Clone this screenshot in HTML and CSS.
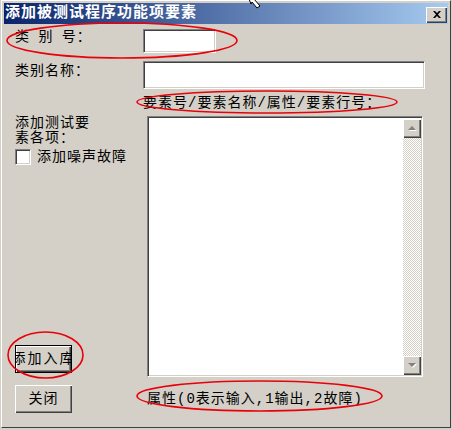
FILE: index.html
```html
<!DOCTYPE html>
<html lang="zh-CN">
<head>
  <meta charset="UTF-8">
  <title>添加被测试程序功能项要素</title>
  <link rel="stylesheet" href="styles.css">
</head>
<body>
  <div class="window">
    <div class="titlebar">
      <span class="title">添加被测试程序功能项要素</span>
      <button class="close-btn">
        <svg width="8" height="7" viewBox="0 0 8 7"><path d="M0 0h2l2 2 2-2h2L5 3.5 8 7H6L4 5 2 7H0l3-3.5z" fill="#000"/></svg>
      </button>
    </div>

    <div class="dialog">
      <div class="row row-id">
        <span class="cell-label spaced">类 别 号：</span>
        <div class="field field-id"></div>
      </div>

      <div class="row row-name">
        <span class="cell-label">类别名称：</span>
        <div class="field field-name"></div>
      </div>

      <div class="row row-hint">
        <span class="hint">要素号/要素名称/属性/要素行号：</span>
      </div>

      <div class="row row-items">
        <div class="left-col">
          <div>
            <div class="items-label">添加测试要素各项：</div>
            <label class="check">
              <span class="check-box"></span>
              <span>添加噪声故障</span>
            </label>
          </div>
          <button class="btn btn-default"><span>添加入库</span></button>
        </div>
        <div class="memo">
          <div class="memo-text"></div>
          <div class="scrollbar">
            <div class="scroll-btn">
              <svg width="9" height="6" viewBox="0 0 9 6"><path d="M1 5h8L5 1z" fill="#fff"/><path d="M0 4h8L4 0z" fill="#808080"/></svg>
            </div>
            <div class="scroll-track"></div>
            <div class="scroll-btn">
              <svg width="9" height="6" viewBox="0 0 9 6"><path d="M1 1h8L5 5z" fill="#fff"/><path d="M0 0h8L4 4z" fill="#808080"/></svg>
            </div>
          </div>
        </div>
      </div>

      <div class="row row-bottom">
        <button class="btn"><span>关闭</span></button>
        <span class="note">属性(0表示输入,1输出,2故障)</span>
      </div>
    </div>
  </div>

  <!-- пометки красным поверх окна -->
  <svg class="marks" width="452" height="430" viewBox="0 0 452 430">
    <g fill="none" stroke="#e8000a" stroke-width="1.6">
      <ellipse cx="122" cy="40.5" rx="115" ry="17.5"/>
      <ellipse cx="267" cy="102" rx="130" ry="11"/>
      <ellipse cx="45.5" cy="355" rx="37.5" ry="23"/>
      <ellipse cx="259.5" cy="396" rx="122.5" ry="15"/>
    </g>
  </svg>
  <svg class="cursor" width="16" height="10" viewBox="0 0 16 10">
    <path d="M1 0h5l6 7-3 2-5-6-1 2z" fill="#fff" stroke="#000" stroke-width="1"/>
  </svg>
</body>
</html>
```

FILE: styles.css
```css
/* окно в стиле Windows 2000 */
* {
  box-sizing: border-box;
}
body {
  margin: 0;
  width: 452px;
  height: 430px;
  overflow: hidden;
  position: relative;
  background: #d4d0c8;
  color: #000;
  font-family: "Liberation Mono", "Noto Sans CJK SC", monospace;
  font-size: 14px;
  line-height: 16px;
  letter-spacing: 1px;
}
.window {
  margin-left: 1px;
  width: 450px;
  height: 428px;
  border-top: 1px solid #fff;
  border-left: 1px solid #fff;
  border-right: 1px solid #404040;
  border-bottom: 1px solid #404040;
  padding: 2px 2px 0 2px;
}
/* заголовок */
.titlebar {
  height: 21px;
  display: flex;
  align-items: center;
  justify-content: space-between;
  padding: 0 1px 0 1px;
  background: linear-gradient(90deg, #0a246a, #a6caf0);
}
.title {
  color: #fff;
  font-weight: bold;
  font-size: 15px;
  letter-spacing: 1px;
}
.close-btn {
  width: 21px;
  height: 16px;
  padding: 0;
  border: 0;
  margin-top: 2px;
  background: #d4d0c8;
  box-shadow: inset 1px 1px #fff, inset -1px -1px #404040, inset -2px -2px #808080;
  display: flex;
  align-items: center;
  justify-content: center;
}
/* содержимое */
.dialog {
  padding: 5px 0 0 11px;
}
.row {
  display: flex;
}
.cell-label {
  width: 128px;
  flex: none;
}
.spaced {
  word-spacing: -1px;
}
.field {
  background: #fff;
  border-top: 1px solid #808080;
  border-left: 1px solid #808080;
  border-right: 1px solid #fff;
  border-bottom: 1px solid #fff;
  box-shadow: inset 1px 1px #404040, inset -1px -1px #d4d0c8;
}
.field-id {
  width: 73px;
  height: 24px;
}
.row-name {
  margin-top: 8px;
}
.row-name .cell-label {
  margin-top: 2px;
}
.field-name {
  width: 282px;
  height: 28px;
}
.row-hint {
  margin-top: 6px;
  padding-left: 128px;
}
.row-items {
  margin-top: 5px;
}
.left-col {
  width: 130px;
  flex: none;
  display: flex;
  flex-direction: column;
  justify-content: space-between;
}
.items-label {
  width: 80px;
  line-height: 15px;
}
.check {
  display: flex;
  align-items: center;
  gap: 6px;
  margin-top: 3px;
}
.check-box {
  width: 16px;
  height: 16px;
  background: #fff;
  border-top: 1px solid #808080;
  border-left: 1px solid #808080;
  border-right: 1px solid #fff;
  border-bottom: 1px solid #fff;
  box-shadow: inset 1px 1px #404040, inset -1px -1px #d4d0c8;
}
/* кнопки */
.btn {
  width: 57px;
  height: 28px;
  padding: 0;
  border: 0;
  background: #d4d0c8;
  font: inherit;
  letter-spacing: 1px;
  color: #000;
  display: flex;
  align-items: center;
  justify-content: center;
  overflow: hidden;
  white-space: nowrap;
  box-shadow: inset 1px 1px #fff, inset -1px -1px #404040, inset -2px -2px #808080;
}
.btn-default {
  margin-bottom: 4px;
  letter-spacing: 2px;
  box-shadow: inset 0 0 0 1px #000, inset 2px 2px #fff, inset -2px -2px #404040, inset -3px -3px #808080;
}
.btn span {
  flex: none;
}
/* многострочное поле */
.memo {
  margin-left: 2px;
  width: 276px;
  height: 261px;
  display: flex;
  background: #fff;
  border-top: 1px solid #808080;
  border-left: 1px solid #808080;
  border-right: 1px solid #fff;
  border-bottom: 1px solid #fff;
  box-shadow: inset 1px 1px #404040, inset -1px -1px #d4d0c8;
  padding: 2px 1px 1px 2px;
}
.memo-text {
  flex: 1;
}
.scrollbar {
  width: 18px;
  display: flex;
  flex-direction: column;
}
.scroll-btn {
  height: 19px;
  flex: none;
  background: #d4d0c8;
  box-shadow: inset 1px 1px #fff, inset -1px -1px #404040, inset -2px -2px #808080;
  display: flex;
  align-items: center;
  justify-content: center;
}
.scroll-track {
  flex: 1;
  background: repeating-conic-gradient(#d4d0c8 0 25%, #fff 0 50%) 0 0 / 2px 2px;
}
.row-bottom {
  margin-top: 8px;
  align-items: flex-start;
}
.note {
  margin: 6px 0 0 75px;
}
/* пометки */
.marks {
  position: absolute;
  top: 0;
  left: 0;
  pointer-events: none;
}
.cursor {
  position: absolute;
  top: -1px;
  left: 248px;
}
```
